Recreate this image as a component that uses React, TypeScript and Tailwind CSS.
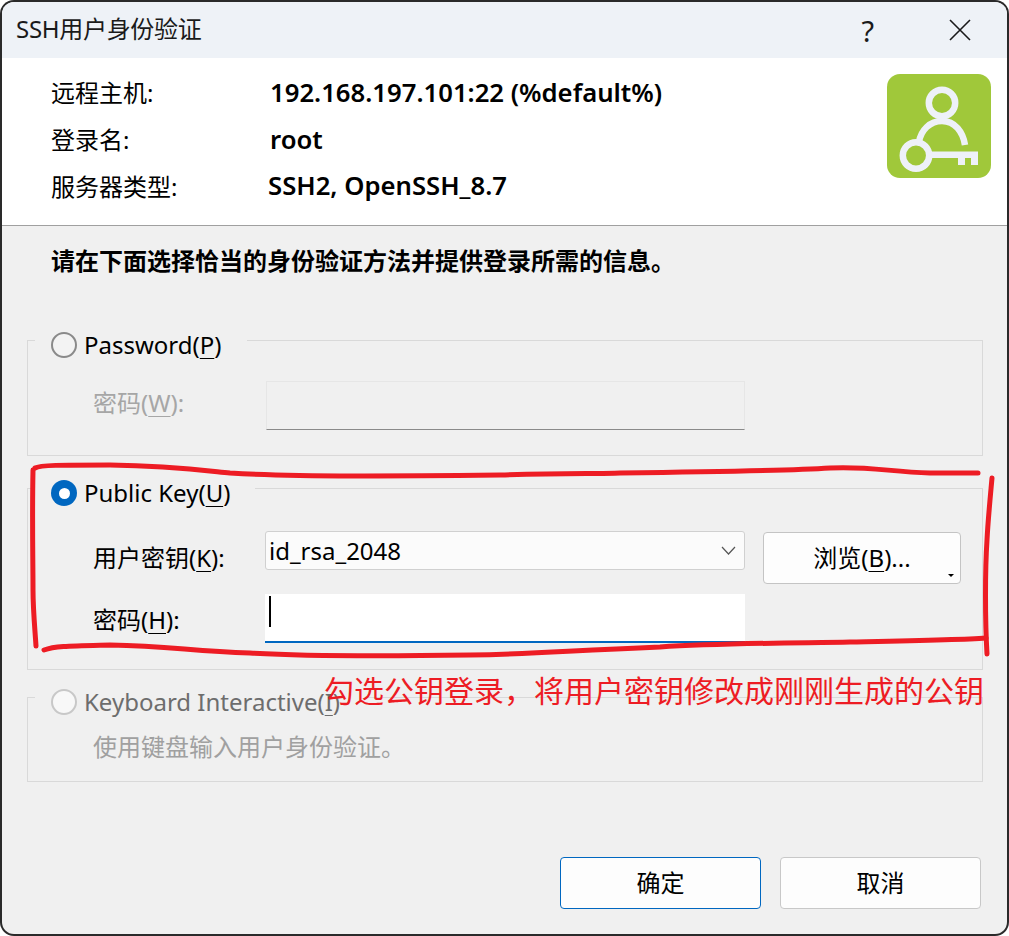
import React from "react";

const fontStack = "font-['Noto_Sans','Noto_Sans_CJK_SC',sans-serif]";

// Hand drawn annotation, coordinates are page pixels
const Annotation = () => (
  <svg className="absolute left-0 top-0 pointer-events-none" width="1009" height="936" fill="none" stroke="#ed1c24" strokeWidth="5" strokeLinecap="round" strokeLinejoin="round">
    <path d="M33 470C32 520 33 560 33 590C33 610 35 630 36 646" />
    <path d="M35 468C40 465 60 465 110 465C170 466 200 470 230 473C300 477 400 476 500 475C570 473 600 474 620 473C700 472 800 470 830 468C870 466 890 472 930 473C950 473 965 473 978 473" />
    <path d="M992 478C990 500 988 520 987 540C985 570 985 620 987 654" />
    <path d="M44 650C55 646 70 646 110 645C170 646 190 651 250 653C300 656 400 656 470 655C540 654 560 651 660 647C720 643 800 643 850 642C900 641 960 640 986 638" />
  </svg>
);

const KeyLogo = () => (
  <svg width="104" height="104" viewBox="0 0 104 104" className="mt-[16px] mr-[16px] shrink-0">
    <rect width="104" height="104" rx="13" fill="#a0c83a" />
    <g fill="none" stroke="#eef1f8" strokeWidth="6.5">
      <circle cx="55" cy="29" r="13.2" />
      <path d="M32 68C34 56 43 47 55 47C68 47 76 58 78 71" />
      <circle cx="29" cy="81.5" r="13.2" />
    </g>
    <path d="M42 77.5H91V91H84V84H78V91H71V84H42Z" fill="#eef1f8" />
  </svg>
);

const Radio = ({ state }: { state: "off" | "on" | "disabled" }) => {
  if (state === "on") {
    return (
      <span className="flex h-[26px] w-[26px] items-center justify-center rounded-full bg-[#0067c0]">
        <span className="h-[11px] w-[11px] rounded-full bg-white" />
      </span>
    );
  }
  return (
    <span
      className={
        state === "off"
          ? "h-[26px] w-[26px] rounded-full border-2 border-[#8a8a8a] bg-[#f3f3f3]"
          : "h-[26px] w-[26px] rounded-full border-2 border-[#c8c8c8] bg-[#f8f8f8]"
      }
    />
  );
};

const Legend = ({ state, text, hot, color }: { state: "off" | "on" | "disabled"; text: string; hot: string; color: string }) => (
  <div className={`ml-[7px] flex h-[30px] w-fit -mt-[11px] items-center bg-[#f0f0f0] pl-[16px] pr-[25px] text-[24px] leading-[30px] ${color}`}>
    <Radio state={state} />
    <span className="ml-[7px] whitespace-nowrap">
      {text}(<span className="underline underline-offset-[4px] decoration-1">{hot}</span>)
    </span>
  </div>
);

export default function App() {
  return (
    <div className={`h-[936px] w-[1009px] rounded-[14px] bg-[#2a2a2a] p-[2px] text-black ${fontStack}`}>
      <div className="relative flex h-[932px] w-[1005px] flex-col overflow-hidden rounded-[12px] bg-[#f0f0f0]">
        {/* Title bar */}
        <div className="flex h-[56px] shrink-0 items-center justify-between bg-[#eef2f7]">
          <span className="ml-[14px] -mt-[2px] text-[24px] tracking-[-0.3px] text-[#1a1a1a]">SSH用户身份验证</span>
          <div className="flex items-center">
            <span className="text-[29px] leading-none text-[#1a1a1a]">?</span>
            <svg width="22" height="22" viewBox="0 0 22 22" className="ml-[75px] mr-[36px]" stroke="#1a1a1a" strokeWidth="1.6" fill="none">
              <path d="M1 1L21 21M21 1L1 21" />
            </svg>
          </div>
        </div>

        {/* Session info */}
        <div className="flex h-[168px] shrink-0 justify-between border-b border-[#a0a0a0] bg-white">
          <div className="pl-[49px] pt-[11px] text-[24px]">
            <div className="flex h-[47px] items-center">
              <span className="w-[219px]">远程主机:</span>
              <span className="mt-[2px] text-[25.7px] font-semibold">192.168.197.101:22 (%default%)</span>
            </div>
            <div className="flex h-[47px] items-center">
              <span className="w-[219px]">登录名:</span>
              <span className="mt-[2px] text-[25.7px] font-semibold">root</span>
            </div>
            <div className="flex h-[47px] items-center">
              <span className="w-[217px]">服务器类型:</span>
              <span className="text-[25.7px] font-semibold">SSH2, OpenSSH_8.7</span>
            </div>
          </div>
          <KeyLogo />
        </div>

        {/* Form */}
        <div className="flex flex-1 flex-col px-[25px] pt-[17px]">
          <div className="-mx-[1px] h-[36px] pl-[25px] text-[24px] font-semibold leading-[36px]">
            请在下面选择恰当的身份验证方法并提供登录所需的信息。
          </div>

          <div className="mt-[61px] h-[116px] w-[956px] border border-[#d9d9d9]">
            <Legend state="off" text="Password" hot="P" color="text-black" />
            <div className="ml-[65px] mt-[21px] flex items-center">
              <span className="mb-[5px] w-[173px] text-[24px] text-[#a6a6a6]">
                密码(<span className="underline underline-offset-[4px] decoration-1">W</span>):
              </span>
              <div className="h-[49px] w-[479px] border border-[#e6e6e6] border-b-[#8a8a8a] bg-[#f0f0f0]" />
            </div>
          </div>

          <div className="mt-[32px] h-[182px] w-[956px] border border-[#d9d9d9]">
            <Legend state="on" text="Public Key" hot="U" color="text-black" />
            <div className="ml-[65px] mt-[23px] flex h-[53px] items-start">
              <span className="mt-[9px] h-[36px] w-[172px] text-[24px] leading-[36px]">
                用户密钥(<span className="underline underline-offset-[4px] decoration-1">K</span>):
              </span>
              <div className="flex h-[39px] w-[480px] items-center justify-between rounded-[3px] border border-[#d0d0d0] bg-[#fbfbfb] pl-[3px] pr-[8px] text-[24px]">
                <span className="leading-none">id_rsa_2048</span>
                <svg width="15" height="9" viewBox="0 0 15 9" fill="none" stroke="#555555" strokeWidth="1.2">
                  <path d="M1 1L7.5 8L14 1" />
                </svg>
              </div>
              <button className="relative ml-[18px] mt-[1px] h-[52px] w-[198px] rounded-[4px] border border-[#c4c4c4] bg-[#fdfdfd] text-[24px]">
                浏览(<span className="underline underline-offset-[4px] decoration-1">B</span>)...
                <span className="absolute bottom-[6px] right-[6px] h-0 w-0 border-x-[3px] border-t-[3px] border-x-transparent border-t-black" />
              </button>
            </div>
            <div className="ml-[65px] mt-[10px] flex items-start">
              <span className="mt-[8px] h-[36px] w-[172px] text-[24px] leading-[36px]">
                密码(<span className="underline underline-offset-[4px] decoration-1">H</span>):
              </span>
              <div className="relative h-[49px] w-[480px] border-b-2 border-[#0067c0] bg-white">
                <span className="absolute left-[4px] top-[2px] h-[31px] w-[1.5px] bg-black" />
              </div>
            </div>
          </div>

          <div className="mt-[27px] h-[85px] w-[956px] border border-[#d9d9d9]">
            <Legend state="disabled" text="Keyboard Interactive" hot="I" color="text-[#6d6d6d]" />
            <div className="ml-[65px] mt-[12px] h-[36px] text-[24px] leading-[36px] text-[#a0a0a0]">使用键盘输入用户身份验证。</div>
          </div>

          <div className="mt-auto flex justify-end gap-[19px] pb-[25px] pr-[1px]">
            <button className="h-[52px] w-[201px] rounded-[4px] border border-[#0067c0] bg-[#fdfdfd] text-[24px]">确定</button>
            <button className="h-[52px] w-[201px] rounded-[4px] border border-[#c8c8c8] bg-[#fdfdfd] text-[24px]">取消</button>
          </div>
        </div>
      </div>

      <Annotation />
      <span className="absolute left-[324px] top-[670px] whitespace-nowrap text-[30px] leading-[42px] text-[#ed1c24]">
        勾选公钥登录，将用户密钥修改成刚刚生成的公钥
      </span>
    </div>
  );
}
